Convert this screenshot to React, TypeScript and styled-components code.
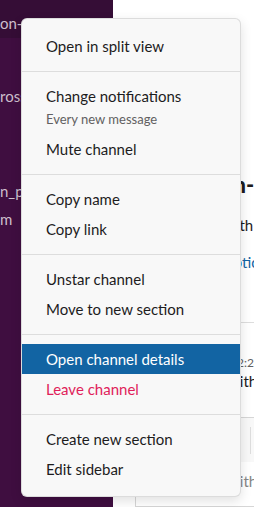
import React from 'react'
import styled, { createGlobalStyle } from 'styled-components'
import { Bold, Italic, Strikethrough, Link2 } from 'lucide-react'

type MenuEntry =
    | { kind: 'item'; label: string; hint?: string; active?: boolean; danger?: boolean }
    | { kind: 'separator' }

const menuEntries: MenuEntry[] = [
    { kind: 'item', label: 'Open in split view' },
    { kind: 'separator' },
    { kind: 'item', label: 'Change notifications', hint: 'Every new message' },
    { kind: 'item', label: 'Mute channel' },
    { kind: 'separator' },
    { kind: 'item', label: 'Copy name' },
    { kind: 'item', label: 'Copy link' },
    { kind: 'separator' },
    { kind: 'item', label: 'Unstar channel' },
    { kind: 'item', label: 'Move to new section' },
    { kind: 'separator' },
    { kind: 'item', label: 'Open channel details', active: true },
    { kind: 'item', label: 'Leave channel', danger: true },
    { kind: 'separator' },
    { kind: 'item', label: 'Create new section' },
    { kind: 'item', label: 'Edit sidebar' },
]

// sidebar rows: gap above each row, label peeking out left of the menu
const sidebarRows = [
    { gap: 0, label: 'on-call', active: true },
    { gap: 44, label: 'ross-team' },
    { gap: 67, label: 'n_platform' },
    { gap: 0, label: 'm' },
]

//context menu
const ChannelMenu = () => (
    <Menu role="menu">
        {menuEntries.map((entry, index) =>
            entry.kind === 'separator'
                ? <Separator key={index} />
                : entry.hint
                    ? <HintItem key={index}>
                        <HintTitle>{entry.label}</HintTitle>
                        <Hint>{entry.hint}</Hint>
                    </HintItem>
                    : <Item key={index} $active={entry.active} $danger={entry.danger}>{entry.label}</Item>
        )}
    </Menu>
)

const App = () => (
    <>
        <GlobalStyle />
        <Page>
            <Sidebar>
                <SidebarTop />
                {sidebarRows.map((row, index) =>
                    <SidebarRow key={index} $gap={row.gap} $active={row.active}>{row.label}</SidebarRow>
                )}
            </Sidebar>
            <Main>
                <Heading $indent={69}>design-team</Heading>
                <Text $indent={111} $top={15}>with the whole team</Text>
                <LinkText $indent={51}>Add description</LinkText>
                <Divider />
                <Time $indent={117}>12:24 PM</Time>
                <Text $indent={115} $top={0}>with everyone</Text>
                <Composer>
                    <Toolbar>
                        <ToolButton><Bold size={16} /></ToolButton>
                        <ToolButton><Italic size={16} /></ToolButton>
                        <ToolButton><Strikethrough size={16} /></ToolButton>
                        <ToolButton><Link2 size={16} /></ToolButton>
                        <ToolDivider />
                    </Toolbar>
                    <Placeholder>with design-team</Placeholder>
                </Composer>
            </Main>
            <ChannelMenu />
        </Page>
    </>
)


/* Style */
const GlobalStyle = createGlobalStyle`
    html, body {
        margin: 0;
        padding: 0;
        background: #ffffff;
    }
    body {
        font-family: Lato, "Noto Sans", "Liberation Sans", sans-serif;
        -webkit-font-smoothing: antialiased;
    }
    * {
        box-sizing: border-box;
    }
`
const Page = styled.div`
    position: relative;
    display: flex;
    width: 254px;
    height: 507px;
    overflow: hidden;
`
const Sidebar = styled.nav`
    width: 113px;
    flex: none;
    display: flex;
    flex-direction: column;
    background-color: #3f0e40;
`
const SidebarTop = styled.div`
    height: 8px;
    background-color: #350d36;
`
const SidebarRow = styled.div<{ $gap: number; $active?: boolean }>`
    height: ${p => p.$active ? 30 : 28}px;
    margin-top: ${p => p.$gap}px;
    display: flex;
    align-items: center;
    white-space: nowrap;
    overflow: hidden;
    font-size: 15px;
    color: #cdbfcd;
    background-color: ${p => p.$active ? '#350d36' : 'transparent'};
`
const Main = styled.main`
    flex: 1;
    min-width: 0;
    display: flex;
    flex-direction: column;
    background-color: #ffffff;
    white-space: nowrap;
`
const Heading = styled.h1<{ $indent: number }>`
    margin: 171px 0 0;
    padding-left: ${p => p.$indent}px;
    font-size: 22px;
    line-height: 28px;
    font-weight: 900;
    color: #1d1c1d;
`
const Text = styled.p<{ $indent: number; $top: number }>`
    margin: ${p => p.$top}px 0 0;
    padding-left: ${p => p.$indent}px;
    font-size: 15px;
    line-height: 22px;
    color: #1d1c1d;
`
const LinkText = styled.a<{ $indent: number }>`
    display: block;
    margin-top: 15px;
    padding-left: ${p => p.$indent}px;
    font-size: 15px;
    line-height: 22px;
    color: #1264a3;
`
const Divider = styled.hr`
    margin: 49px 0 0;
    border: 0;
    height: 1px;
    background-color: #dddddd;
`
const Time = styled.span<{ $indent: number }>`
    display: block;
    margin-top: 32px;
    padding-left: ${p => p.$indent}px;
    font-size: 12px;
    line-height: 15px;
    color: #616061;
`
const Composer = styled.div`
    margin: 25px 0 0 22px;
    border: 1px solid #d6d6d6;
    border-right: 0;
    border-radius: 8px 0 0 0;
    flex: 1;
`
const Toolbar = styled.div`
    height: 44px;
    display: flex;
    align-items: center;
    padding-left: 2px;
    background-color: #f8f8f8;
    border-radius: 8px 0 0 0;
`
const ToolButton = styled.span`
    width: 26px;
    height: 28px;
    display: flex;
    align-items: center;
    justify-content: center;
    color: #a0a0a0;
`
const ToolDivider = styled.span`
    width: 1px;
    height: 27px;
    margin-left: 8px;
    background-color: #dddddd;
`
const Placeholder = styled.div`
    padding: 8px 0 0 92px;
    font-size: 15px;
    line-height: 22px;
    color: #868686;
`
const Menu = styled.div`
    position: absolute;
    top: 18px;
    left: 21px;
    width: 220px;
    padding: 12px 0;
    border: 1px solid rgba(29, 28, 29, 0.13);
    border-radius: 6px;
    background-color: #f8f8f8;
    box-shadow: 0 4px 12px 0 rgba(0, 0, 0, 0.12);
`
const Item = styled.div<{ $active?: boolean; $danger?: boolean }>`
    height: 30px;
    display: flex;
    align-items: center;
    padding: 0 24px;
    font-size: 15px;
    line-height: 22px;
    color: ${p => p.$active ? '#ffffff' : p.$danger ? '#e01e5a' : '#1d1c1d'};
    background-color: ${p => p.$active ? '#1264a3' : 'transparent'};
    cursor: pointer;
`
const HintItem = styled.div`
    padding: 0 24px 7px;
`
const HintTitle = styled.div`
    height: 30px;
    display: flex;
    align-items: center;
    font-size: 15px;
    color: #1d1c1d;
`
const Hint = styled.div`
    font-size: 13px;
    line-height: 16px;
    color: #616061;
`
const Separator = styled.div`
    height: 1px;
    margin: 10px 0 9px;
    background-color: #dddddd;
`

export default App
